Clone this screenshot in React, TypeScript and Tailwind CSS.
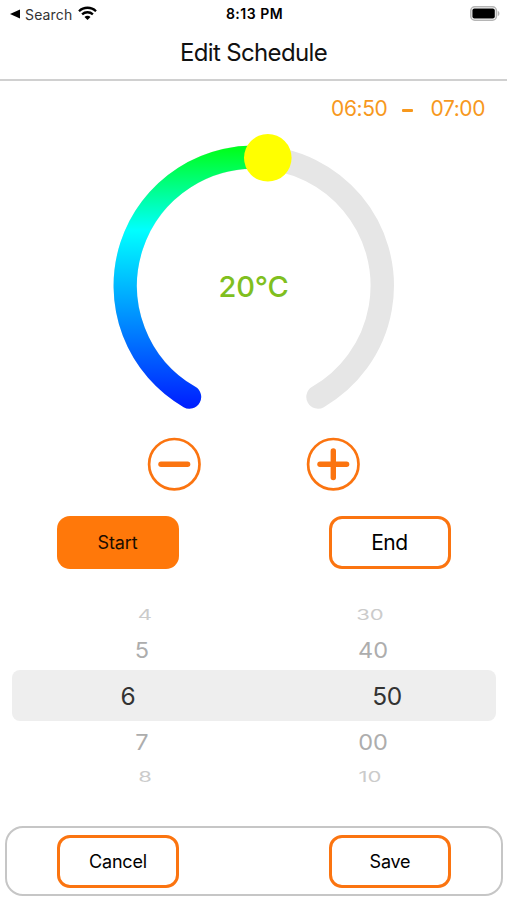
import { useState } from "react";

type WheelRow = {
  hour: string;
  minute: string;
  row: string;
  text: string;
};

const wheelRows: WheelRow[] = [
  { hour: "4", minute: "30", row: "h-[30px] gap-[185px]", text: "text-[#cbcbcb] scale-x-[0.9] scale-y-[0.57]" },
  { hour: "5", minute: "40", row: "h-10 gap-[191px]", text: "text-[#adadad] scale-x-[0.96] scale-y-[0.88]" },
  { hour: "6", minute: "50", row: "h-[51px] gap-[219px] rounded-[8px] bg-[#eeeeee]", text: "pt-px text-[#333333] tracking-[-0.3px]" },
  { hour: "7", minute: "00", row: "h-[42px] gap-[191px]", text: "text-[#adadad] scale-x-[0.96] scale-y-[0.88]" },
  { hour: "8", minute: "10", row: "h-[27px] gap-[185px]", text: "pt-px text-[#cbcbcb] scale-x-[0.9] scale-y-[0.57]" },
];

function StatusBar() {
  return (
    <div className="grid h-7 grid-cols-3 items-center pr-[7px] pl-[9px]">
      <div className="flex items-center">
        <svg width="11" height="10" viewBox="0 0 11 10">
          <path d="M1 5 11 0.6v8.8z" fill="#000" />
        </svg>
        <span className="ml-[5px] text-[14px] tracking-[0.15px] text-[#333]">Search</span>
        <svg className="-mt-[3px] ml-[6px]" width="19" height="14" viewBox="0 0 19 14" fill="none" stroke="#000" strokeWidth="2.3">
          <path d="M1 5.2a12.2 12.2 0 0 1 17 0" />
          <path d="M4.1 8.4a7.8 7.8 0 0 1 10.8 0" />
          <path d="M9.5 13.9 6.5 10.9a4.2 4.2 0 0 1 6 0z" fill="#000" stroke="none" />
        </svg>
      </div>
      <span className="-mt-px text-center text-[14px] font-semibold tracking-[0.5px] text-black">8:13 PM</span>
      <svg className="-mt-[2px] justify-self-end" width="30" height="15" viewBox="0 0 30 15">
        <rect x="0.8" y="0.8" width="25.6" height="13.4" rx="4" fill="#fff" stroke="#b5b5b5" strokeWidth="1.6" />
        <rect x="2.4" y="2.6" width="22.4" height="9.8" rx="2" fill="#000" />
        <path d="M27.8 5c2.2.6 2.2 4.4 0 5z" fill="#b5b5b5" />
      </svg>
    </div>
  );
}

function Dial({ value }: { value: number }) {
  return (
    <div className="mx-auto grid h-[307px] w-[290px] place-items-center">
      <svg className="col-start-1 row-start-1 self-start" width="290" height="290" viewBox="0 0 290 290" fill="none">
        <defs>
          <linearGradient id="heat" gradientUnits="userSpaceOnUse" x1="0" y1="20" x2="0" y2="279">
            <stop offset="0" stopColor="#00ff20" />
            <stop offset="0.31" stopColor="#00ffff" />
            <stop offset="1" stopColor="#001cff" />
          </linearGradient>
        </defs>
        <path
          d="M80.5 267A128.5 128.5 0 1 1 209 267"
          stroke="#e6e6e6"
          strokeWidth="23.4"
          strokeLinecap="round"
        />
        <path
          d="M80.5 267A128.5 128.5 0 0 1 158.8 28"
          stroke="url(#heat)"
          strokeWidth="23.4"
          strokeLinecap="round"
        />
        <circle cx="158.8" cy="27.8" r="23.8" fill="#ffff00" />
      </svg>
      <span className="col-start-1 row-start-1 mt-[6px] text-[29px] font-medium tracking-[-0.2px] text-[#80bf1f]">
        {value}°C
      </span>
    </div>
  );
}

function StepButton({ plus, onClick }: { plus?: boolean; onClick: () => void }) {
  return (
    <button onClick={onClick} aria-label={plus ? "Increase" : "Decrease"} className="h-[54px] w-[54px]">
      <svg width="54" height="54" viewBox="0 0 54 54" fill="none" stroke="#fb7410">
        <circle cx="27.3" cy="27.2" r="25.2" strokeWidth="2.7" />
        <path d="M14 27.2h26.6" strokeWidth="5.4" strokeLinecap="round" />
        {plus && <path d="M27.3 13.9v26.6" strokeWidth="5.4" strokeLinecap="round" />}
      </svg>
    </button>
  );
}

export default function App() {
  const [temp, setTemp] = useState(20);

  const outlined = "w-[122px] rounded-[13px] border-[3px] border-[#fb7410] bg-white text-black";

  return (
    <div className="flex h-[900px] w-[507px] flex-col overflow-hidden bg-white font-['Inter','Liberation_Sans',sans-serif]">
      <StatusBar />

      <header className="flex h-[53px] items-center justify-center border-b-2 border-[#d0d0d0] pb-[2px]">
        <h1 className="text-[24px] tracking-[-0.65px] text-[#111]">Edit Schedule</h1>
      </header>

      <div className="flex h-[49px] items-center justify-end pt-[6px] pr-[22px] text-[21px] tracking-[-0.4px] text-[#f7981d]">
        <span>06:50</span>
        <span className="mr-[17px] ml-[15px] mt-[3px] h-[3px] w-[11px] rounded-[1px] bg-[#f7981d]" />
        <span>07:00</span>
      </div>

      <Dial value={temp} />

      <div className="flex justify-center gap-[105px]">
        <StepButton onClick={() => setTemp(temp - 1)} />
        <StepButton plus onClick={() => setTemp(temp + 1)} />
      </div>

      <div className="mt-[25px] flex h-[53px] justify-center gap-[150px]">
        <button className="w-[122px] rounded-[13px] bg-[#ff780a] text-[18px] tracking-[-0.1px] text-[#1c0d00]">Start</button>
        <button className={`${outlined} text-[21px] tracking-[-0.4px]`}>End</button>
      </div>

      {/* time wheel */}
      <div className="mx-3 mt-[31px] w-[484px]">
        {wheelRows.map((r) => (
          <div key={r.hour} className={`flex items-center justify-center pl-[7px] text-[24.5px] ${r.row}`}>
            <span className={`w-10 text-center ${r.text}`}>{r.hour}</span>
            <span className={`w-10 text-center ${r.text}`}>{r.minute}</span>
          </div>
        ))}
      </div>

      <div className="mr-1 ml-[5px] mt-[36px] flex h-[70px] items-center justify-center gap-[150px] rounded-[18px] border-2 border-[#c6c6c6]">
        <button className={`${outlined} h-[53px] text-[18px] tracking-[-0.2px]`}>Cancel</button>
        <button className={`${outlined} h-[53px] text-[18px] tracking-[-0.2px]`}>Save</button>
      </div>
    </div>
  );
}
